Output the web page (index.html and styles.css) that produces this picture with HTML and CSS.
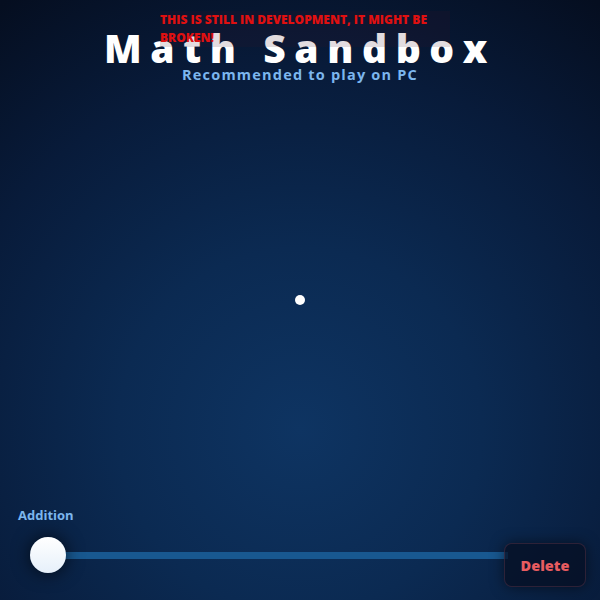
FILE: index.html
```html
<!DOCTYPE html>
<html>
<head>
<meta charset="utf-8">
<link rel="stylesheet" href="styles.css">
</head>
<body>
<div class="app">
  <header class="header">
    <div class="warning">THIS IS STILL IN DEVELOPMENT, IT MIGHT BE BROKEN!</div>
    <h1 class="title">Math Sandbox</h1>
    <div class="subtitle">Recommended to play on PC</div>
  </header>
  <div class="canvas">
    <div class="point"></div>
  </div>
  <footer class="controls">
    <div class="label">Addition</div>
    <div class="row">
      <div class="slider">
        <div class="thumb"></div>
        <div class="track"></div>
      </div>
      <button class="delete">Delete</button>
    </div>
  </footer>
</div>
</body>
</html>
```
FILE: styles.css
```css
html, body {
  margin: 0;
  padding: 0;
  width: 600px;
  height: 600px;
  overflow: hidden;
}
body {
  font-family: "Open Sans", "DejaVu Sans", sans-serif;
  background: radial-gradient(ellipse 520px 520px at 300px 430px, #0e3462 0%, #0b2a52 35%, #081b3a 70%, #050e20 100%);
}
.app {
  position: relative;
  width: 600px;
  height: 600px;
  display: flex;
  flex-direction: column;
}
.header {
  position: relative;
  display: flex;
  flex-direction: column;
  align-items: center;
  padding-top: 23px;
}
.warning {
  position: absolute;
  left: 160px;
  top: 11px;
  width: 290px;
  color: #e01010;
  font-weight: 800;
  font-size: 12px;
  line-height: 18px;
  background: rgba(60, 20, 40, 0.15);
  z-index: 2;
}
.title {
  margin: 0;
  color: #ffffff;
  font-size: 39px;
  font-weight: 800;
  letter-spacing: 8.6px;
  line-height: 50px;
  padding-left: 0;
}
.subtitle {
  margin-top: -8px;
  color: #7cb6ee;
  font-size: 14.5px;
  font-weight: 700;
  letter-spacing: 1.2px;
}
.canvas {
  flex: 1;
}
.point {
  position: absolute;
  left: 295px;
  top: 295px;
  width: 10px;
  height: 10px;
  border-radius: 50%;
  background: #ffffff;
}
.controls {
  padding: 0 14px 13px 18px;
  display: flex;
  flex-direction: column;
  gap: 13px;
}
.label {
  color: #7cb6ee;
  font-size: 13px;
  font-weight: 700;
  line-height: 18px;
}
.row {
  display: flex;
  align-items: flex-end;
}
.slider {
  flex: 1;
  display: flex;
  align-items: center;
  padding-left: 12px;
  margin-right: -4px;
  margin-bottom: 14px;
}
.thumb {
  width: 36px;
  height: 36px;
  border-radius: 50%;
  background: linear-gradient(#ffffff, #e6f0fa);
  box-shadow: 0 0 18px rgba(0, 0, 0, 0.7);
  flex: none;
  position: relative;
  z-index: 1;
}
.track {
  flex: 1;
  height: 7px;
  background: #185890;
  margin-left: -2px;
}
.delete {
  width: 82px;
  height: 44px;
  border-radius: 8px;
  border: 1px solid rgba(120, 60, 80, 0.35);
  background: rgba(5, 15, 35, 0.75);
  color: #e85c60;
  font-family: "Open Sans", "DejaVu Sans", sans-serif;
  font-weight: 800;
  font-size: 14.5px;
  box-shadow: 0 0 14px rgba(0, 0, 0, 0.5);
  position: relative;
  z-index: 1;
}
```
